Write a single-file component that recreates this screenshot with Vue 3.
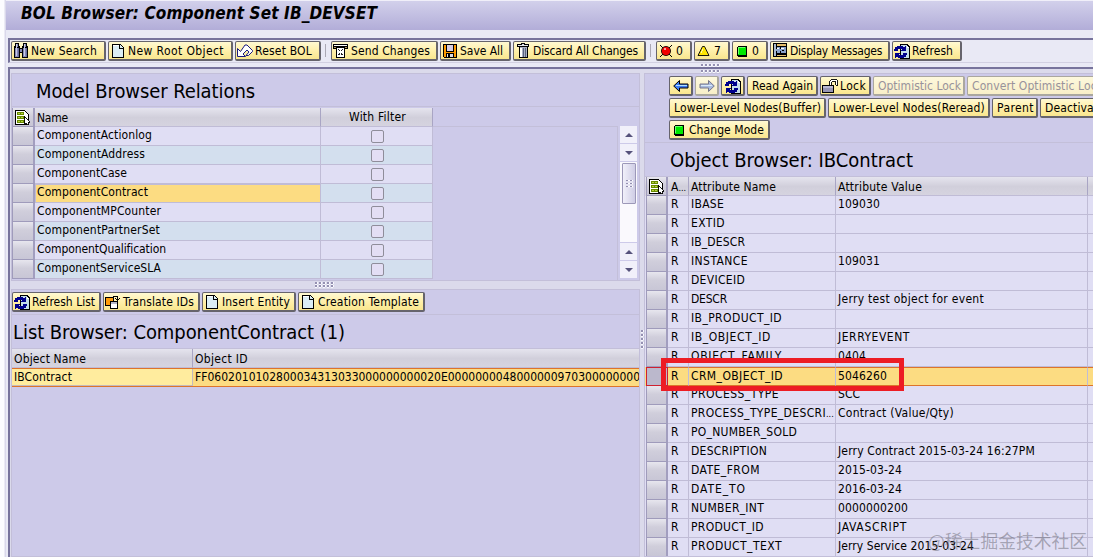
<script setup>
import { ref } from "vue";

// spreads the letters so that a label takes exactly the given width
const vFit = (el, { value }) => {
  if (!value || !el.textContent) return;
  el.style.letterSpacing = "0px";
  const natural = el.getBoundingClientRect().width;
  el.style.letterSpacing = (value - natural) / el.textContent.length + "px";
};

const mainTools = [
  { icon: "search", text: "New Search", width: 95, fit: 66 },
  { icon: "page", text: "New Root Object", width: 125, fit: 96 },
  { icon: "undo", text: "Reset BOL", width: 86, fit: 57 },
  { separator: true },
  { icon: "send", text: "Send Changes", width: 107, fit: 79 },
  { icon: "save", text: "Save All", width: 71, fit: 43 },
  { icon: "trash", text: "Discard All Changes", width: 133, fit: 105 },
  { separator: true },
  { icon: "error", text: "0", width: 36 },
  { icon: "warning", text: "7", width: 36 },
  { icon: "ok", text: "0", width: 36 },
  { icon: "messages", text: "Display Messages", width: 120, fit: 92 },
  { icon: "refresh", text: "Refresh", width: 70, fit: 41 },
];

const listTools = [
  { icon: "refresh", text: "Refresh List", width: 89, fit: 63 },
  { icon: "translate", text: "Translate IDs", width: 97, fit: 71 },
  { icon: "page", text: "Insert Entity", width: 94, fit: 68 },
  { icon: "page", text: "Creation Template", width: 127, fit: 101 },
];

const objectTools = [
  [
    { icon: "left", width: 24 },
    { icon: "right", width: 24, disabled: true },
    { icon: "refresh", width: 24 },
    { text: "Read Again", width: 71, fit: 61 },
    { icon: "lock", text: "Lock", width: 51, fit: 26 },
    { text: "Optimistic Lock", width: 92, fit: 83, disabled: true },
    { text: "Convert Optimistic Lock", width: 146, fit: 131, disabled: true },
  ],
  [
    { text: "Lower-Level Nodes(Buffer)", width: 157, fit: 147 },
    { text: "Lower-Level Nodes(Reread)", width: 162, fit: 152 },
    { text: "Parent", width: 46, fit: 37 },
    { text: "Deactivate", width: 74, fit: 60 },
  ],
  [{ icon: "ok", text: "Change Mode", width: 101, fit: 75 }],
];

const relations = [
  { name: "ComponentActionlog", fit: 115 },
  { name: "ComponentAddress", fit: 108 },
  { name: "ComponentCase", fit: 90 },
  { name: "ComponentContract", fit: 111 },
  { name: "ComponentMPCounter", fit: 124 },
  { name: "ComponentPartnerSet", fit: 123 },
  { name: "ComponentQualification", fit: 129 },
  { name: "ComponentServiceSLA", fit: 124 },
];
const selectedRelation = ref("ComponentContract");

const objectId = "FF06020101028000343130330000000000" + "20E000000004800000097030000000000";

const attributes = [
  { name: "IBASE", fit: 33, value: "109030", valueFit: 42 },
  { name: "EXTID", fit: 34, value: "" },
  { name: "IB_DESCR", fit: 54, value: "" },
  { name: "INSTANCE", fit: 57, value: "109031", valueFit: 42 },
  { name: "DEVICEID", fit: 54, value: "" },
  { name: "DESCR", fit: 36, value: "Jerry test object for event", valueFit: 146 },
  { name: "IB_PRODUCT_ID", fit: 91, value: "" },
  { name: "IB_OBJECT_ID", fit: 80, value: "JERRYEVENT", valueFit: 72 },
  { name: "OBJECT_FAMILY", fit: 91, value: "0404", valueFit: 28 },
  { name: "CRM_OBJECT_ID", fit: 92, value: "5046260", valueFit: 49 },
  { name: "PROCESS_TYPE", fit: 88, value: "SCC", valueFit: 22 },
  { name: "PROCESS_TYPE_DESCRI", fit: 135, value: "Contract (Value/Qty)", valueFit: 116, cut: true },
  { name: "PO_NUMBER_SOLD", fit: 106, value: "" },
  { name: "DESCRIPTION", fit: 76, value: "Jerry Contract 2015-03-24 16:27PM", valueFit: 197 },
  { name: "DATE_FROM", fit: 69, value: "2015-03-24", valueFit: 64 },
  { name: "DATE_TO", fit: 55, value: "2016-03-24", valueFit: 64 },
  { name: "NUMBER_INT", fit: 73, value: "0000000200", valueFit: 70 },
  { name: "PRODUCT_ID", fit: 73, value: "JAVASCRIPT", valueFit: 69 },
  { name: "PRODUCT_TEXT", fit: 91, value: "Jerry Service 2015-03-24", valueFit: 136 },
];
const selectedAttribute = ref("CRM_OBJECT_ID");

const icons = {
  search:
    '<path d="M2 0h4v3h1v2h2V3h1V0h4v3h1v12H9v-5H7v5H1V3h1z" fill="#000"/><path d="M3 1h2v3H3zM11 1h2v3h-2zM2 5h4v9H2zM10 5h4v9h-4zM7 6h2v3H7z" fill="#8588b8"/><path d="M3 1h1v12H3zM11 1h1v12h-1z" fill="#c9cbe6"/><path d="M5 5h1v9H5zM13 5h1v9h-1z" fill="#6a6ca0"/>',
  page:
    '<path d="M2.500 1.500h8l3 3v10h-11z" fill="#dceef5" stroke="#000"/><path d="M10 1v4h4v1H9V1z" fill="#000"/><path d="M3 2h6v1H3z" fill="#fff"/>',
  undo:
    '<path d="M.5 5.500v8h8l-2.500-2.500 4-4 2 2-3 3.500h2.500l4-4v-1L10 2H8L3.500 8.500z" fill="#fff" stroke="#19197f" shape-rendering="auto"/>',
  send:
    '<path d="M0 1h15v5H0z" fill="#000"/><path d="M1 2h13v1H1z" fill="#fff"/><path d="M1 4h2v1H1zM12 4h2v1h-2z" fill="#b39b63"/><path d="M3.500 4.500h8v10h-8z" fill="#fff" stroke="#000"/><path d="M5 6l5 7M10 6l-5 7" stroke="#222" stroke-dasharray="1 .6"/>',
  save:
    '<path d="M1 1h14v14H2l-1-1z" fill="#000"/><path d="M2 2h2v12H2zM12 2h2v12h-2zM3 9h10v1H3z" fill="#ff9b00"/><path d="M5 2h6v6H5z" fill="#d9cfe2"/><path d="M5 11h6v3H5z" fill="#dcdce4"/><path d="M6 11h2v3H6z" fill="#000"/>',
  trash:
    '<path d="M6 0h4v1h4v3h-1v11H4V4H2V1h4z" fill="#000"/><path d="M7 1h2v1H7zM3 2h10v1H3z" fill="#e2e4ec"/><path d="M5 4h7v10H5z" fill="#a9afc4"/><path d="M5 5h2v9H5z" fill="#fff"/><path d="M8 5h1v9H8zM10 5h1v9h-1z" fill="#59627e"/>',
  error:
    '<path d="M2 2l3 3M14 2l-3 3M2 14l3-3M14 14l-3-3" stroke="#000"/><circle cx="8" cy="8" r="4.600" fill="#f00000" stroke="#000" stroke-width=".8" shape-rendering="auto"/><path d="M6 5h2v2H6z" fill="#ff9a9a"/>',
  warning:
    '<path d="M6.500 3.500h2l4.500 9H2z" fill="#ffe600" stroke="#000" stroke-width=".9" shape-rendering="auto"/><path d="M6 6h1v2H6zM5 8h1v2H5z" fill="#fff9a8"/>',
  ok:
    '<path d="M4 3h8l1 1v9l-1 1H4l-1-1V4z" fill="#000"/><path d="M4 4h8v8H4z" fill="#00e800"/><path d="M4 4h7v1H4zM4 5h1v6H4z" fill="#6dff6d"/>',
  messages:
    '<path d="M1 0h14v14H1z" fill="#000"/><path d="M2 1h2v12H2z" fill="#a9b9d2"/><path d="M5 1h9v2H5zM5 12h9v1H5z" fill="#e5bd6c"/><path d="M5 4h3v2h1V4h5v6H9V8H8v2H5V8H4V6h1z" fill="#8aa2ca"/><path d="M9 5h3v1H9zM5 5h2v1H5z" fill="#fff"/><path d="M10 7h2v1h-2z" fill="#000"/>',
  refresh:
    '<path d="M6 1h7l3 3v12H6z" fill="#000"/><path d="M7 2h6v3h2v10H7z" fill="#c5deea"/><path d="M13 2v3h2z" fill="#fff"/><path d="M3 3h6v1h2V3h1v5H7V7h1V6H4v2H0V6h1V4h2zM10 15H4v-1H2v1H1v-5h5v1H5v1h4v-2h4v2h-1v2h-2z" fill="#00008c"/>',
  translate:
    '<path d="M0 3h9v9H0z" fill="#000"/><path d="M1 4h7v7H1z" fill="#ff9c0a"/><path d="M5.500 7.500h7v7h-7z" fill="#fff" stroke="#000"/><path d="M6 8h6v2H6z" fill="#b8b8c8"/><path d="M8 2.500h4.500V6M10 4l2.500 2L15 4" fill="none" stroke="#000"/>',
  lock:
    '<path d="M0 7h12v8H0z" fill="#000"/><path d="M1 8h10v6H1z" fill="#9694b4"/><path d="M1 8h10v2H1z" fill="#bbb9d3"/><path d="M7.500 7V3l2-2h4l2 2v4h-2V4l-1-1h-2l-1 1v3z" fill="#fff" stroke="#000" stroke-width=".9"/>',
  left:
    '<path d="M.7 8l5.800-5.500V6H15v4H6.500v3.500z" fill="#3c7bf5" stroke="#000" shape-rendering="auto"/><path d="M3 7h11v1H3z" fill="#aee0ff"/>',
  right:
    '<path d="M15.300 8L9.500 2.500V6H1v4h8.500v3.500z" fill="#a9bbe0" stroke="#777789" shape-rendering="auto"/><path d="M2 7h11v1H2z" fill="#dbeaf7"/>',
  layout:
    '<path d="M.5.500h9l4 4v10H.5z" fill="#fff" stroke="#000"/><path d="M2 2h7v3H2zM2 6h8v3H2zM2 10h8v3H2z" fill="#668800"/><path d="M3 3h2v1H3zM6 3h2v1H6zM3 7h2v1H3zM6 7h2v1H6zM3 11h2v1H3zM6 11h2v1H6z" fill="#b6d43c"/><path d="M9.500 6v7.500l1.500-1 1 2.500 2-1-1-2h2z" fill="#fff" stroke="#000" stroke-width=".9"/>',
};
</script>

<template>
  <div class="window">
    <header class="titlebar"><span v-fit="356">BOL Browser: Component Set IB_DEVSET</span></header>

    <div class="toolbar toolbar--main">
      <template v-for="(tool, i) in mainTools" :key="i">
        <i v-if="tool.separator" class="separator" />
        <button v-else class="btn" :style="{ width: tool.width + 'px' }">
          <svg class="icon" viewBox="0 0 16 16" v-html="icons[tool.icon]" />
          <span v-fit="tool.fit">{{ tool.text }}</span>
        </button>
      </template>
      <i class="grip grip--top" />
    </div>

    <main class="workspace">
      <i class="grip grip--workspace" />
      <div class="left">
        <section class="pane relations">
          <h2 class="pane__title relations__title"><span v-fit="219">Model Browser Relations</span></h2>
          <div class="relations__body">
            <div class="relations__table">
              <div class="relations__row head">
                <span class="corner"><svg class="icon" viewBox="0 0 16 16" v-html="icons.layout" /></span>
                <span class="cell"><span v-fit="31">Name</span></span>
                <span class="cell cell--center"><span v-fit="57">With Filter</span></span>
              </div>
              <div
                v-for="relation in relations"
                :key="relation.name"
                class="relations__row"
                @click="selectedRelation = relation.name"
              >
                <span class="handle" />
                <span class="cell" :class="{ 'name--selected': relation.name === selectedRelation }">
                  <span v-fit="relation.fit">{{ relation.name }}</span>
                </span>
                <span class="cell cell--center"><i class="checkbox" /></span>
              </div>
            </div>
            <div class="relations__empty" />
            <div class="scrollbar">
              <i class="scrollbar__arrow up" />
              <i class="scrollbar__arrow down" />
              <div class="scrollbar__track"><div class="scrollbar__thumb"><i /></div></div>
              <i class="scrollbar__arrow up" />
              <i class="scrollbar__arrow down" />
            </div>
          </div>
        </section>

        <div class="splitter"><i class="grip" /></div>

        <section class="pane list">
          <div class="toolbar toolbar--list">
            <button
              v-for="tool in listTools"
              :key="tool.text"
              class="btn"
              :style="{ width: tool.width + 'px' }"
            >
              <svg class="icon" viewBox="0 0 16 16" v-html="icons[tool.icon]" />
              <span v-fit="tool.fit">{{ tool.text }}</span>
            </button>
          </div>
          <h2 class="pane__title list__title"><span v-fit="332">List Browser: ComponentContract (1)</span></h2>
          <div class="list__row head">
            <span class="cell"><span v-fit="72">Object Name</span></span>
            <span class="cell"><span v-fit="53">Object ID</span></span>
          </div>
          <div class="list__row list__row--selected">
            <span class="cell"><span v-fit="58">IBContract</span></span>
            <span class="cell cell--id">{{ objectId }}</span>
          </div>
        </section>
      </div>

      <div class="divider"><i class="grip grip--vertical" /></div>

      <section class="pane object">
        <div class="object__tools">
          <div v-for="(row, r) in objectTools" :key="r" class="toolbar">
            <button
              v-for="(tool, i) in row"
              :key="i"
              class="btn"
              :class="{ 'btn--disabled': tool.disabled, 'btn--icon': !tool.text, 'btn--text': !tool.icon }"
              :style="{ width: tool.width + 'px' }"
            >
              <svg v-if="tool.icon" class="icon" viewBox="0 0 16 16" v-html="icons[tool.icon]" />
              <span v-if="tool.text" v-fit="tool.fit">{{ tool.text }}</span>
            </button>
          </div>
        </div>
        <h2 class="pane__title object__title"><span v-fit="243">Object Browser: IBContract</span></h2>
        <div class="object__row head">
          <span class="corner"><svg class="icon" viewBox="0 0 16 16" v-html="icons.layout" /></span>
          <span class="cell">A<small>...</small></span>
          <span class="cell"><span v-fit="85">Attribute Name</span></span>
          <span class="cell"><span v-fit="84">Attribute Value</span></span>
          <span class="cell" />
        </div>
        <div
          v-for="attr in attributes"
          :key="attr.name"
          class="object__row"
          :class="{ 'object__row--selected': attr.name === selectedAttribute }"
          @click="selectedAttribute = attr.name"
        >
          <span class="handle" />
          <span class="cell">R</span>
          <span class="cell"><span v-fit="attr.fit">{{ attr.name }}</span><small v-if="attr.cut">...</small></span>
          <span class="cell"><span v-fit="attr.valueFit">{{ attr.value }}</span></span>
          <span class="cell" />
        </div>
      </section>
    </main>

    <div class="marker" />
    <div class="watermark">@稀土掘金技术社区</div>
  </div>
</template>

<style>
body {
  overflow: hidden;
}
</style>

<style scoped>
* {
  box-sizing: border-box;
}

.window {
  position: relative;
  width: 1093px;
  height: 557px;
  overflow: hidden;
  padding-left: 8px;
  font-family: "DejaVu Sans Condensed", "DejaVu Sans", sans-serif;
  font-stretch: condensed;
  font-size: 12px;
  color: #000;
  background: linear-gradient(90deg, #fcfcff 0 4px, #dad8eb 5px 6px, #e9e9f5 6px);
}

.titlebar {
  height: 30px;
  margin-left: -2px;
  padding-left: 15px;
  border-top: 1px solid #f0eff9;
  line-height: 25px;
  font-size: 17px;
  font-weight: bold;
  font-style: italic;
  white-space: pre;
  background: linear-gradient(#d2d0eb, #b2add8);
}

.toolbar {
  display: flex;
  gap: 2px;
  height: 20px;
}

.toolbar--main {
  position: relative;
  height: 25px;
  margin-top: 8px;
  padding: 1px 0 0 1px;
  border-top: 2px solid #77739c;
  border-left: 2px solid #77739c;
  border-bottom: 1px solid #d2d0e2;
}

.btn {
  display: flex;
  flex: none;
  align-items: center;
  gap: 2px;
  height: 20px;
  padding: 1px 0 0 1px;
  border: 1px solid #66646c;
  border-right-width: 2px;
  border-bottom-width: 2px;
  border-radius: 2px;
  overflow: hidden;
  font: inherit;
  color: #000;
  text-align: left;
  white-space: pre;
  background: linear-gradient(#fff9d2, #fff0ab 50%, #f9e68e);
}

.btn--icon {
  padding-left: 3px;
}

.btn--text {
  padding-left: 4px;
}

.btn--disabled {
  color: #98929b;
  border-color: #aaa79f;
  background: linear-gradient(#fdf8dd, #f8efc8);
}

.icon {
  flex: none;
  width: 16px;
  height: 16px;
  shape-rendering: crispEdges;
}

.separator {
  width: 4px;
  height: 13px;
  margin: 3px 0 0 2px;
  border-left: 1px solid #aaa8b4;
}

.workspace {
  position: relative;
  display: flex;
  height: 490px;
  margin-top: 4px;
  padding: 4px 0 0 1px;
  border-top: 2px solid #77739c;
  border-left: 2px solid #77739c;
  background: #dbdaeb;
}

.left {
  display: flex;
  flex-direction: column;
  width: 629px;
}

.pane {
  border: 1px solid #c3bfd9;
  background: #cdcae9;
}

.pane__title {
  margin: 0;
  font-size: 20px;
  font-weight: normal;
  white-space: pre;
  border-bottom: 1px solid #c3bfd9;
}

.relations {
  height: 208px;
  overflow: hidden;
}

.relations__title {
  height: 33px;
  padding-left: 24px;
  line-height: 35px;
}

.relations__body {
  display: flex;
  height: 173px;
  padding-top: 1px;
}

.relations__row {
  display: grid;
  grid-template-columns: 23px 286px 112px;
  height: 19px;
}

.relations__row:nth-child(even) {
  background: #e0def4;
}

.relations__row:nth-child(odd) {
  background: #d3dfee;
}

.relations__row.head,
.list__row.head,
.object__row.head {
  background: linear-gradient(#e5e4ee, #d1cfdb 50%, #d6d4e0);
}

.cell {
  min-width: 0;
  overflow: hidden;
  padding-left: 2px;
  border-right: 1px solid #c0bcd6;
  border-bottom: 1px solid #c0bcd6;
  line-height: 17px;
  white-space: nowrap;
}

.cell--center {
  display: flex;
  justify-content: center;
  align-items: center;
  padding: 0 0 0 2px;
}

.head .cell {
  line-height: 20px;
  border-right-color: #a9a5c4;
}

.corner,
.handle {
  border: 1px solid #9f9bbb;
  border-top: 0;
  border-right: 2px solid #a29ebf;
  background: linear-gradient(#e7e6ee, #d0cedb 45%, #c8c6d6);
}

.corner .icon {
  display: block;
  margin: 2px 0 0 2px;
}

.name--selected {
  border: 1px solid #c0bcd6;
  padding-left: 1px;
  line-height: 15px;
  background: #fcdc82;
}

.checkbox {
  width: 13px;
  height: 13px;
  margin-top: 1px;
  border: 1px solid #8f8d9a;
  border-radius: 2px;
  background: #e3def4;
}

.relations__empty {
  flex: 1;
  margin-top: 18px;
  border: solid #c3bfd9;
  border-width: 1px 1px 0 0;
}

.scrollbar {
  display: flex;
  flex-direction: column;
  gap: 1px;
  width: 17px;
  margin: 18px 2px 0 2px;
}

.scrollbar__arrow {
  display: flex;
  flex: none;
  align-items: center;
  justify-content: center;
  height: 17px;
  background: #f1f0fa;
}

.scrollbar__arrow::before {
  content: "";
  border: 4px solid transparent;
}

.up::before {
  border-bottom-color: #56527b;
  border-top: 0;
}

.down::before {
  border-top-color: #56527b;
  border-bottom: 0;
}

.scrollbar__track {
  flex: none;
  height: 80px;
  padding: 1px 1px 0 2px;
  background: #faf9fd;
}

.scrollbar__thumb {
  display: flex;
  align-items: center;
  justify-content: center;
  height: 41px;
  border: 1px solid #9c98b8;
  border-radius: 1px;
  background: linear-gradient(90deg, #f1f0fa, #cfcde5);
}

.scrollbar__thumb i {
  width: 7px;
  height: 8px;
  background: repeating-linear-gradient(#0000 0 1px, #e4e2f1 1px 3px), repeating-linear-gradient(90deg, #9591b2 0 2px, #fff 2px 4px);
}

.splitter {
  display: flex;
  justify-content: center;
  height: 8px;
  padding: 1px 2px 0 0;
}

.grip {
  width: 19px;
  height: 6px;
  background: radial-gradient(circle at 1px 1px, #9591b2 1px, #f8f8fd 1px 1.800px, transparent 2px);
  background-size: 4px 3px;
}

.grip--top {
  position: absolute;
  left: 691px;
  top: 24px;
  height: 3px;
}

.grip--workspace {
  position: absolute;
  left: 691px;
  top: 1px;
  height: 3px;
}

.grip--vertical {
  position: absolute;
  left: 631px;
  top: 261px;
  width: 3px;
  height: 20px;
  background-size: 3px 4px;
}

.list {
  flex: 1;
}

.toolbar--list {
  height: 25px;
  padding: 2px 0 0;
  border-bottom: 1px solid #c3bfd9;
}

.list__title {
  height: 34px;
  padding-left: 1px;
  line-height: 34px;
}

.list__row {
  display: grid;
  grid-template-columns: 181px 1fr;
  height: 19px;
}

.list__row .cell:last-child {
  border-right: 0;
}

.list__row--selected {
  border-top: 1px solid #dd742b;
  border-bottom: 1px solid #dd742b;
  background: #fcdc82;
}

.list__row--selected .cell {
  border-color: #c3b9bd;
}

.list__row--selected .cell:first-child {
  background: #ffec9e;
}

.cell--id.cell {
  border: 0;
}

.divider {
  width: 4px;
}

.object {
  flex: 1;
  min-width: 0;
  overflow: hidden;
  border-right: 0;
}

.object__tools {
  display: flex;
  flex-direction: column;
  gap: 2px;
  height: 69px;
  padding: 2px 0 0 24px;
  border-bottom: 1px solid #c3bfd9;
}

.object__title {
  height: 34px;
  padding-left: 25px;
  line-height: 35px;
}

.object__row {
  display: grid;
  grid-template-columns: 22px 21px 147px 252px 1fr;
  height: 19px;
  padding-left: 1px;
  background: #e0def4;
}

.object__row .cell:nth-child(2) {
  padding-left: 3px;
}

.object__row .cell:last-child {
  border-right: 0;
}

.object__row--selected {
  background: #fcdc82;
}

.object__row--selected .cell {
  border-top: 1px solid #dd742b;
  border-bottom-color: #dd742b;
}

.object__row--selected .handle {
  border: 1px solid #cf2030;
  background: #bbb8cc;
}

small {
  font-size: 9px;
}

/* highlight frame laid over the selected attribute */
.marker {
  position: absolute;
  left: 661px;
  top: 358px;
  width: 243px;
  height: 33px;
  border: 5px solid #ed1c24;
}

.watermark {
  position: absolute;
  left: 928px;
  top: 528px;
  font: 17.800px/25px "Noto Sans CJK SC", sans-serif;
  white-space: pre;
  color: rgba(90, 90, 100, 0.45);
}
</style>
